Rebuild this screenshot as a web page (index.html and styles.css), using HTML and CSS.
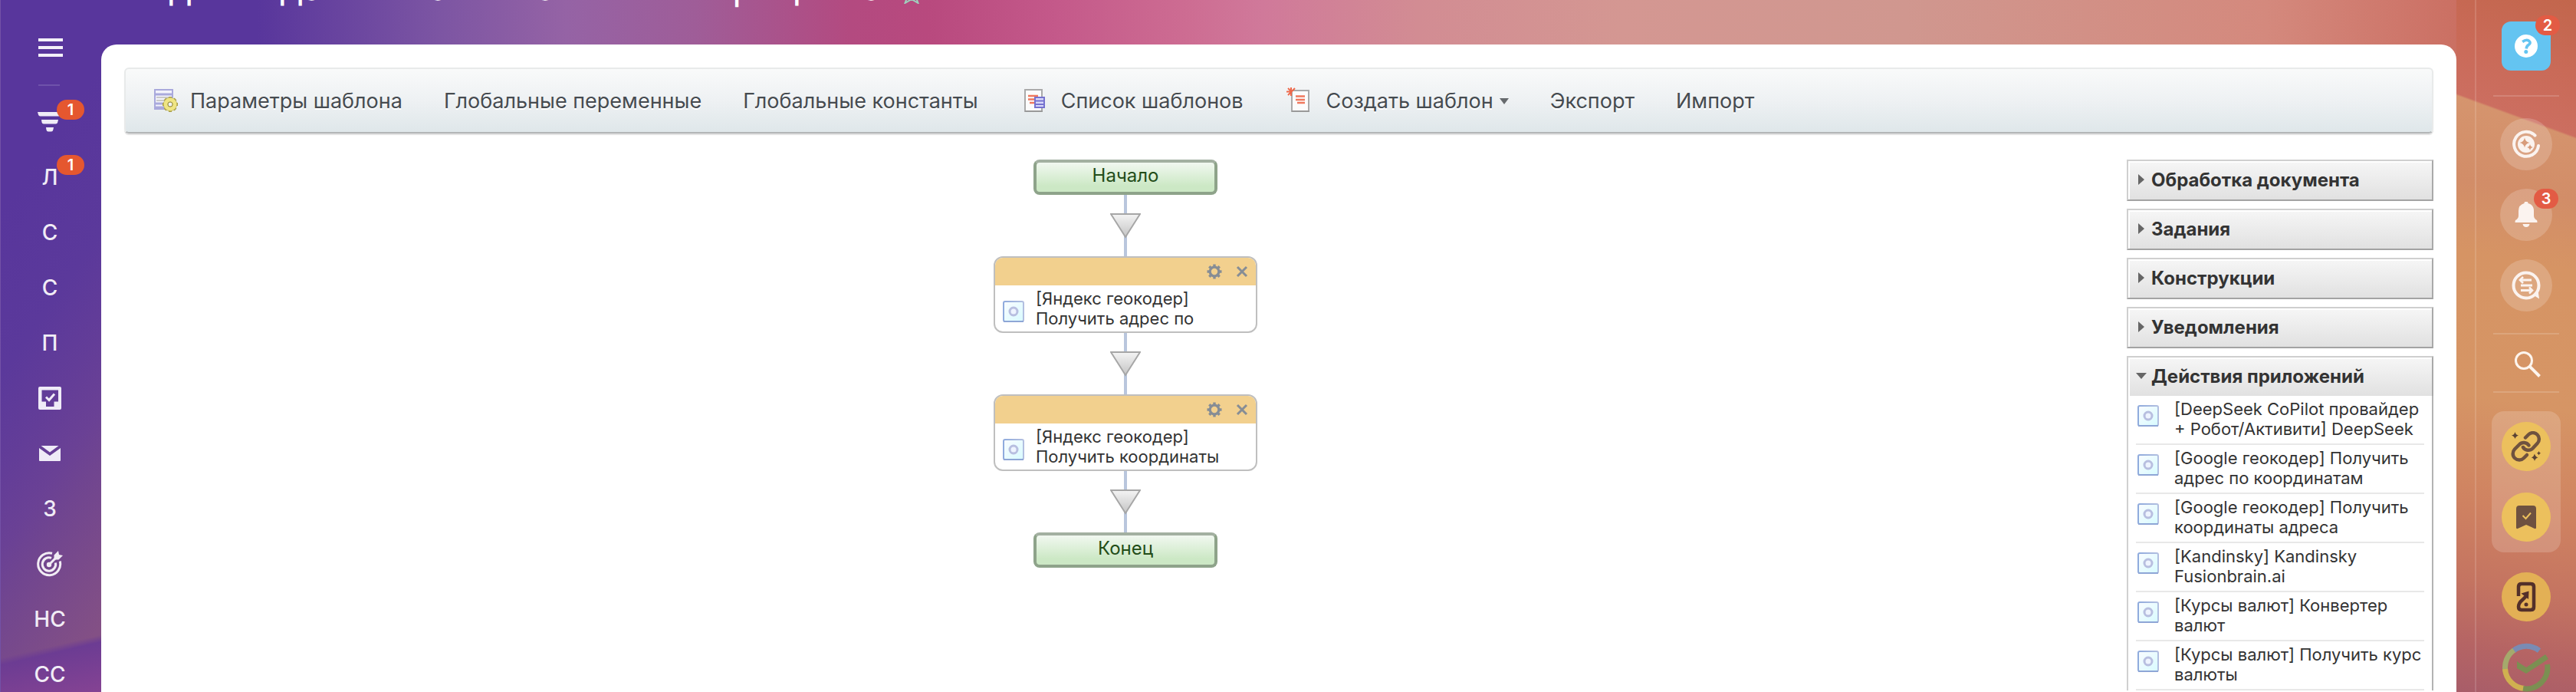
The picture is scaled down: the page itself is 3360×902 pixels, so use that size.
FILE: index.html
```
<!DOCTYPE html>
<html lang="ru">
<head>
    <meta charset="UTF-8">
    <meta name="viewport" content="width=device-width, initial-scale=1.0">
    <title>Дизайнер бизнес-процесса</title>
    <link rel="stylesheet" href="styles.css">
</head>
<body>
    <!-- общие иконки -->
    <svg class="sprite" aria-hidden="true">
        <defs>
            <linearGradient id="arrowFill" x1="0" y1="0" x2="0" y2="1">
                <stop offset="0" stop-color="#f4f4f4"/>
                <stop offset="1" stop-color="#c4c4c4"/>
            </linearGradient>
            <linearGradient id="actFill" x1="0" y1="0" x2="1" y2="1">
                <stop offset="0" stop-color="#fafcff"/>
                <stop offset="1" stop-color="#d8fbff"/>
            </linearGradient>
            <linearGradient id="actStroke" x1="0" y1="0" x2="1" y2="0">
                <stop offset="0" stop-color="#8fabdd"/>
                <stop offset="1" stop-color="#b3bfe0"/>
            </linearGradient>
            <symbol id="activity" viewBox="0 0 30 30">
                <rect x="2" y="2" width="26" height="26" rx="2" fill="url(#actFill)" stroke="url(#actStroke)" stroke-width="2"/>
                <path d="M2 28h26" stroke="#8ea6d6" stroke-width="2"/>
                <circle cx="15" cy="15" r="5" fill="#eef4ff" stroke="#b8bfe0" stroke-width="3"/>
            </symbol>
            <symbol id="arrow" viewBox="0 0 40 80">
                <path d="M20 0v80" stroke="#b9c6dd" stroke-width="4"/>
                <path d="M1 25h38L20 55z" fill="url(#arrowFill)" stroke="#a6a6a6" stroke-width="2"/>
            </symbol>
            <symbol id="gear" viewBox="0 0 20 20">
                <circle cx="10" cy="10" r="5.8" fill="none" stroke="#868d95" stroke-width="3.2"/>
                <path d="M10 .5v3M10 16.500v3M.5 10h3M16.500 10h3M3.300 3.300l2 2M14.700 14.700l2 2M3.300 16.700l2-2M14.700 5.300l2-2" stroke="#868d95" stroke-width="3.4"/>
            </symbol>
            <symbol id="close" viewBox="0 0 16 16">
                <path d="M2 2l12 12M14 2L2 14" stroke="#868d95" stroke-width="3"/>
            </symbol>
        </defs>
    </svg>

    <div class="layout">
        <nav class="left-menu">
            <button class="menu-toggle" aria-label="Меню">
                <svg width="32" height="24" viewBox="0 0 32 24"><path d="M0 2h32M0 12h32M0 22h32" stroke="#f3f0f9" stroke-width="4"/></svg>
            </button>
            <div class="menu-line"></div>
            <a class="menu-item" href="#" aria-label="CRM">
                <svg width="34" height="26" viewBox="0 0 34 26" fill="#efebf7"><path d="M1 0h31l-1 3.500q-.5 2-2.500 2H4.500q-2 0-2.500-2zM6 10h22l-.8 3.500q-.5 2-2.500 2H9q-2 0-2.500-2zM12 20h10l-.6 3q-.5 2.500-2.500 2.500h-4q-2 0-2.500-2.500z"/></svg>
                <span class="badge">1</span>
            </a>
            <a class="menu-item" href="#">Л<span class="badge">1</span></a>
            <a class="menu-item" href="#">С</a>
            <a class="menu-item" href="#">С</a>
            <a class="menu-item" href="#">П</a>
            <a class="menu-item" href="#" aria-label="Задачи">
                <svg width="30" height="30" viewBox="0 0 30 30"><path fill="#efebf7" fill-rule="evenodd" d="M2 0h26a2 2 0 0 1 2 2v26a2 2 0 0 1-2 2H2a2 2 0 0 1-2-2V2a2 2 0 0 1 2-2zM4.500 4.500v15H10V26h10.500v-6.500H26v-15z"/><path d="M10 13.500l4 4 7-8" fill="none" stroke="#efebf7" stroke-width="3"/></svg>
            </a>
            <a class="menu-item" href="#" aria-label="Почта">
                <svg width="28" height="20" viewBox="0 0 28 20" fill="#efebf7"><path d="M2.500 0h23L14 8.500z"/><path d="M0 3l14 10L28 3v16a1 1 0 0 1-1 1H1a1 1 0 0 1-1-1z"/></svg>
            </a>
            <a class="menu-item" href="#">З</a>
            <a class="menu-item" href="#" aria-label="Цели">
                <svg width="34" height="34" viewBox="0 0 34 34" fill="none" stroke="#f1ecf4"><path d="M20 3.200A14.500 14.500 0 1 0 30.200 13.500" stroke-width="3"/><path d="M19 9.300A8.700 8.700 0 1 0 24.400 15.500" stroke-width="3"/><circle cx="16" cy="18" r="3.200" fill="#f1ecf4" stroke="none"/><path d="M16 18l10-10" stroke-width="3"/><path d="M22.500 5.500L28 0l1 5 5 1-5.500 5.500h-6z" fill="#f1ecf4" stroke="none"/></svg>
            </a>
            <a class="menu-item" href="#">НС</a>
            <a class="menu-item" href="#">СС</a>
        </nav>

        <div class="center">
            <header class="page-header">
                <h1 class="page-title">Лид: Создание шаблона бизнес-процесса</h1>
                <svg class="star" width="26" height="24" viewBox="0 0 26 24"><path d="M13 1l3.500 8 8.500.5-6.500 5.500 3 8L13 18l-8.500 5 3-8L1 9.500 9.500 9z" fill="none" stroke="#9fd0bd" stroke-width="2"/></svg>
            </header>

            <main class="workarea">
                <div class="toolbar">
                    <button class="tool tool-icon">
                        <svg width="40" height="36" viewBox="0 0 40 36">
                            <rect x="8" y="3" width="23" height="25" fill="#f2f2fb" stroke="#a9a9dc" stroke-width="2"/>
                            <path d="M8 9h23M8 21h12M8 26h12" stroke="#a9a9dc" stroke-width="3"/>
                            <path d="M10 13h18M10 17h10" stroke="#c9c9c9" stroke-width="2"/>
                            <circle cx="28" cy="22" r="6" fill="none" stroke="#aaa049" stroke-width="6"/>
                            <path d="M28 12v20M18 22h20M21 15l14 14M35 15L21 29" stroke="#aaa049" stroke-width="4"/>
                            <circle cx="28" cy="22" r="6" fill="none" stroke="#efe583" stroke-width="5"/>
                            <circle cx="28" cy="22" r="3" fill="#eff2f3" stroke="#9b9147"/>
                        </svg>
                        Параметры шаблона
                    </button>
                    <button class="tool">Глобальные переменные</button>
                    <button class="tool">Глобальные константы</button>
                    <button class="tool tool-icon">
                        <svg width="40" height="36" viewBox="0 0 40 36">
                            <rect x="7" y="3" width="22" height="28" fill="#fcfcfc" stroke="#aaa" stroke-width="2"/>
                            <path d="M7 31h23" stroke="#999" stroke-width="2"/>
                            <path d="M11 11h13M11 15.500h8M13 20h6" stroke="#f0785e" stroke-width="2.500"/>
                            <rect x="20" y="13" width="12" height="13" fill="#d8d8fa" stroke="#7572cf" stroke-width="2"/>
                            <path d="M21 17.500h10M21 22h10" stroke="#7572cf" stroke-width="2"/>
                        </svg>
                        Список шаблонов
                    </button>
                    <button class="tool tool-icon">
                        <svg width="40" height="36" viewBox="0 0 40 36">
                            <rect x="9" y="4" width="22" height="27" fill="#fcfcfc" stroke="#aaa" stroke-width="2"/>
                            <path d="M9 31h23" stroke="#999" stroke-width="2"/>
                            <path d="M14 11.500h12M14 16h12M16 20h10" stroke="#f0785e" stroke-width="2.500"/>
                            <path d="M8 0v11M2 5.500h6M4 1l4 4M13 1L4 10" stroke="#ee6a4c" stroke-width="2"/>
                        </svg>
                        Создать шаблон
                        <svg width="12" height="8" viewBox="0 0 12 8"><path d="M0 0h12L6 8z" fill="#666a6d"/></svg>
                    </button>
                    <button class="tool">Экспорт</button>
                    <button class="tool">Импорт</button>
                </div>

                <div class="designer">
                    <div class="flow">
                        <div class="terminal">Начало</div>
                        <svg class="arrow"><use href="#arrow"/></svg>
                        <div class="block">
                            <div class="block-head">
                                <button class="block-btn" aria-label="Настройки"><svg width="20" height="20"><use href="#gear"/></svg></button>
                                <button class="block-btn" aria-label="Удалить"><svg width="16" height="16"><use href="#close"/></svg></button>
                            </div>
                            <div class="block-body">
                                <svg class="activity"><use href="#activity"/></svg>
                                <div class="block-text">[Яндекс геокодер]<br>Получить адрес по</div>
                            </div>
                        </div>
                        <svg class="arrow"><use href="#arrow"/></svg>
                        <div class="block">
                            <div class="block-head">
                                <button class="block-btn" aria-label="Настройки"><svg width="20" height="20"><use href="#gear"/></svg></button>
                                <button class="block-btn" aria-label="Удалить"><svg width="16" height="16"><use href="#close"/></svg></button>
                            </div>
                            <div class="block-body">
                                <svg class="activity"><use href="#activity"/></svg>
                                <div class="block-text">[Яндекс геокодер]<br>Получить координаты</div>
                            </div>
                        </div>
                        <svg class="arrow"><use href="#arrow"/></svg>
                        <div class="terminal">Конец</div>
                    </div>

                    <aside class="groups">
                        <button class="group-head">Обработка документа</button>
                        <button class="group-head">Задания</button>
                        <button class="group-head">Конструкции</button>
                        <button class="group-head">Уведомления</button>
                        <div class="group">
                            <button class="group-head open">Действия приложений</button>
                            <ul class="group-list">
                                <li><svg class="activity"><use href="#activity"/></svg><span>[DeepSeek CoPilot провайдер<br>+ Робот/Активити] DeepSeek</span></li>
                                <li><svg class="activity"><use href="#activity"/></svg><span>[Google геокодер] Получить<br>адрес по координатам</span></li>
                                <li><svg class="activity"><use href="#activity"/></svg><span>[Google геокодер] Получить<br>координаты адреса</span></li>
                                <li><svg class="activity"><use href="#activity"/></svg><span>[Kandinsky] Kandinsky<br>Fusionbrain.ai</span></li>
                                <li><svg class="activity"><use href="#activity"/></svg><span>[Курсы валют] Конвертер<br>валют</span></li>
                                <li><svg class="activity"><use href="#activity"/></svg><span>[Курсы валют] Получить курс<br>валюты</span></li>
                            </ul>
                        </div>
                    </aside>
                </div>
            </main>
        </div>

        <div class="right-bar">
            <div class="right-inner">
                <button class="help" aria-label="Помощь">
                    <svg width="30" height="30" viewBox="0 0 30 30"><circle cx="15" cy="15" r="15" fill="#fff"/><path d="M10.200 9.500Q15 5.800 18.500 8.200T18 13.600Q15.500 15 15.200 18.500" fill="none" stroke="#64c4f1" stroke-width="3.600"/><circle cx="14.800" cy="22.500" r="2.500" fill="#64c4f1"/></svg>
                    <span class="badge badge-red">2</span>
                </button>
                <div class="right-line"></div>
                <div class="round-list">
                    <button class="round" aria-label="CoPilot">
                        <svg width="38" height="38" viewBox="0 0 38 38"><path d="M30.500 7.500A16 16 0 1 0 35 21" fill="none" stroke="#fbf3ef" stroke-width="4" stroke-linecap="round"/><circle cx="19" cy="19" r="11" fill="#fbf3ef"/><path d="M17 10.500q1 5.500 6.500 6.500-5.500 1-6.500 6.500-1-5.500-6.500-6.500 5.500-1 6.500-6.500zM24 19q.7 3.300 4 4-3.300.7-4 4-.7-3.300-4-4 3.300-.7 4-4z" fill="#d89c7b"/></svg>
                    </button>
                    <button class="round" aria-label="Уведомления">
                        <svg width="30" height="34" viewBox="0 0 30 34" fill="#fbf3ef"><path d="M12.500 2a2.500 2.500 0 0 1 5 0Q25 4 25 12v6q0 4 4 6 .5 1 .5 3H.5q0-2 .5-3 4-2 4-6v-6Q5 4 12.500 2zM10.500 29h9q-.7 4-4.500 4t-4.500-4z"/></svg>
                        <span class="badge badge-red">3</span>
                    </button>
                    <button class="round" aria-label="Чат">
                        <svg width="38" height="38" viewBox="0 0 38 38" fill="none" stroke="#fbf3ef"><circle cx="19" cy="19" r="16.500" stroke-width="4"/><path d="M29 32l7 4.500-1.500-11z" fill="#fbf3ef" stroke="none"/><path d="M12 12h14M12 19h15M12 25.500h14" stroke-width="2.800"/><path d="M15 8l-4 4 4 4M23 21.500l4 4-4 4" stroke-width="2.600"/></svg>
                    </button>
                </div>
                <div class="right-line"></div>
                <button class="search" aria-label="Поиск">
                    <svg width="34" height="34" viewBox="0 0 34 34" fill="none" stroke="#fdf5ee"><circle cx="12" cy="12" r="10.500" stroke-width="3"/><path d="M19.500 19.500l13 13" stroke-width="4"/></svg>
                </button>
                <div class="right-line"></div>
                <div class="chat-group">
                    <button class="chat" aria-label="Ссылки">
                        <svg width="40" height="40" viewBox="0 0 40 40" fill="none" stroke="#6f523f"><g stroke-width="4.500" stroke-linecap="round"><path d="M19 8.500l4-4a8 8 0 0 1 11.500 11.500l-6 6.500a8 8 0 0 1-12.500-1.500"/><path d="M21 31l-4 4A8 8 0 0 1 5 23.500l6-6a8 8 0 0 1 12.500 1"/></g><path d="M5.500 1q1 4 4.500 4.500-3.500 1-4.500 4.500-1-3.500-4.500-4.500Q4.500 5 5.500 1zM31 29.500q1 4 4.500 5-3.500.5-4.500 4.500-1-4-4.500-4.500 3.500-1 4.500-5zM36.500 26q.6 2 2.500 2.800-2 .6-2.500 2.500-.6-2-2.500-2.500 2-.8 2.500-2.800z" fill="#5b4234" stroke="none"/></svg>
                    </button>
                    <button class="chat" aria-label="Закладки">
                        <svg width="28" height="32" viewBox="0 0 28 32"><path d="M5 1h18q4 0 4 4v25q0 1.500-2 1l-11-5-11 5q-2 .5-2-1V5q0-4 4-4z" fill="#6e5140"/><path d="M9.500 14l4 4 6.500-7.500" fill="none" stroke="#ecc05d" stroke-width="2"/></svg>
                    </button>
                </div>
                <button class="chat chat-dark" aria-label="Приложение">
                    <svg width="26" height="40" viewBox="0 0 26 40"><path d="M3 19V7q0-4 4-4h12q4 0 4 4v26q0 4-4 4H7q-4 0-4-4 0-5 5-9l6-6" fill="none" stroke="#53302a" stroke-width="4.500"/><path d="M6.500 15.500l10-3-.5 10.500z" fill="#53302a"/><circle cx="13" cy="30" r="2.500" fill="#53302a"/></svg>
                </button>
                <button class="chat-check" aria-label="Готово">
                    <svg width="64" height="64" viewBox="0 0 64 64" fill="none" stroke-width="7"><path d="M49 10A27.500 27.500 0 0 0 15 10.500" stroke="#7a8bb3"/><path d="M16 9.500A27.500 27.500 0 0 0 5 37" stroke="#a5a96c"/><path d="M4.500 34A27.500 27.500 0 0 0 30 59.500" stroke="#d0b050"/><path d="M28 59.500A27.500 27.500 0 0 0 59.500 28" stroke="#7b8f52"/><path d="M20 24v9l12 7 29-19-4-6-25 17z" fill="#7b8f52" stroke="none"/></svg>
                </button>
            </div>
        </div>
    </div>
</body>
</html>
```

FILE: styles.css
```
* {
    box-sizing: border-box;
}
body {
    margin: 0;
    font-family: Inter, "Liberation Sans", sans-serif;
    color: #333;
    background: linear-gradient(90deg, #58369c 10%, #7c55a3 17%, #9563a5 22%, #9f5d98 27%, #b34a80 33%, #b8497e 36%, #c4598a 41%, #cd6c92 46%, #d0799a 49%, #d28c93 55%, #d49792 63%, #d0978f 74%, #d4897d 88%, #cd7468 94%, #c96e60 96%);
}
button {
    padding: 0;
    border: none;
    background: none;
    font: inherit;
    color: inherit;
    cursor: pointer;
}
svg {
    display: block;
    flex: none;
}
.sprite {
    position: absolute;
    width: 0;
    height: 0;
}
.layout {
    display: flex;
    height: 100vh;
    overflow: hidden;
}

/* левое меню */
.left-menu {
    flex: none;
    width: 132px;
    padding-top: 50px;
    border-left: 1px solid #7351a6;
    background:
        linear-gradient(167deg, transparent 92%, #6c3c93 93%, #854393 100%),
        linear-gradient(125deg, #58369c 25%, #5b399b 45%, #633d98 57%, #6a4195 66%, #704590 72%, #835085 92%);
}
.menu-toggle {
    display: block;
    margin-left: 49px;
}
.menu-line {
    width: 28px;
    height: 2px;
    margin: 36px 0 11px 49px;
    background: rgba(255, 255, 255, .14);
}
.menu-item {
    position: relative;
    display: flex;
    align-items: center;
    justify-content: center;
    width: 128px;
    height: 72px;
    font-size: 28px;
    font-weight: 500;
    color: #f1ecf6;
    text-decoration: none;
}
.badge {
    position: absolute;
    top: 7px;
    left: 73px;
    width: 36px;
    height: 26px;
    border-radius: 13px;
    background: #e5572f;
    color: #fff;
    font-size: 20px;
    font-weight: 600;
    line-height: 26px;
    text-align: center;
}
.badge-red {
    top: -8px;
    left: 44px;
    width: 32px;
    background: #e35b44;
}

/* центральная часть */
.center {
    flex: 1;
    min-width: 0;
    display: flex;
    flex-direction: column;
}
.page-header {
    display: flex;
    gap: 24px;
    height: 58px;
    overflow: hidden;
    padding-left: 24px;
}
.page-title {
    margin: -49px 0 0;
    font-size: 48px;
    font-weight: 400;
    line-height: 64px;
    color: #fff;
}
.star {
    margin-top: -19px;
}
.workarea {
    flex: 1;
    min-height: 0;
    padding: 30px 30px 0;
    border-radius: 20px 20px 0 0;
    background: #fff;
}
.toolbar {
    display: flex;
    align-items: center;
    gap: 54px;
    height: 86px;
    padding-left: 30px;
    border: 2px solid #e8eaea;
    border-bottom-color: #b3b6b7;
    border-radius: 6px;
    background: linear-gradient(#f9fafa, #eef1f3 50%, #dfe7ea);
    box-shadow: 0 2px 1px rgba(0, 0, 0, .12);
}
.tool {
    padding-top: 2px;
    font-size: 27px;
    line-height: 36px;
    color: #464b50;
    text-shadow: 0 2px 0 #fff;
    white-space: nowrap;
}
.tool-icon {
    display: flex;
    align-items: center;
    gap: 14px;
}
.tool-icon svg + svg {
    margin-left: -6px;
}
.designer {
    display: flex;
    margin-top: 34px;
}
.flow {
    flex: 1;
    display: flex;
    flex-direction: column;
    align-items: center;
}
.terminal {
    width: 240px;
    height: 46px;
    border: 4px solid #8ea38a;
    border-top-color: #a3b0a1;
    border-radius: 8px;
    background: linear-gradient(#f1f8f0, #cce8c5 80%);
    color: #234d18;
    font-size: 24px;
    line-height: 34px;
    text-align: center;
}
.arrow {
    width: 40px;
    height: 80px;
}
.block {
    width: 344px;
    height: 100px;
    border: 2px solid #bfbfbf;
    border-radius: 12px;
    background: #fff;
    overflow: hidden;
}
.block-head {
    display: flex;
    align-items: center;
    justify-content: flex-end;
    gap: 18px;
    height: 36px;
    padding-right: 10px;
    background: #f2d08e;
}
.block-body {
    display: flex;
    padding: 4px 9px;
}
.activity {
    width: 30px;
    height: 30px;
    margin-top: 15px;
}
.block-text {
    margin-left: 14px;
    font-size: 22px;
    line-height: 26px;
    white-space: nowrap;
}

/* список действий */
.groups {
    flex: none;
    display: flex;
    flex-direction: column;
    gap: 10px;
    width: 400px;
}
.group-head {
    display: flex;
    align-items: center;
    gap: 9px;
    width: 100%;
    height: 54px;
    padding: 0 0 2px 13px;
    border: 2px solid #cfcfcf;
    border-right-color: #a9a9a9;
    border-bottom-color: #a3a3a3;
    background: linear-gradient(#f6f6f6, #e1e1e1);
    box-shadow: inset 2px 2px 0 #fff;
    font-size: 24px;
    font-weight: 700;
}
.group-head::before {
    content: "";
    border: 7px solid transparent;
    border-left: 8px solid #666;
    border-right: none;
}
.group-head.open {
    height: 52px;
    padding-left: 10px;
    gap: 6px;
    border-bottom: none;
}
.group-head.open::before {
    border: 7px solid transparent;
    border-top: 8px solid #666;
    border-bottom: none;
}
.group-list {
    margin: 0;
    padding: 0 10px;
    border-left: 2px solid #d0d0d0;
    border-right: 2px solid #b3b3b3;
    list-style: none;
}
.group-list li {
    display: flex;
    height: 64px;
    padding: 4px 0 0 1px;
    border-bottom: 2px solid #e8e8e8;
    font-size: 22px;
    line-height: 26px;
    white-space: nowrap;
}
.group-list .activity {
    margin-top: 7px;
    margin-right: 19px;
}

/* правая панель */
.right-bar {
    flex: none;
    width: 156px;
    padding-left: 24px;
    background:
        linear-gradient(200deg, #c2664c, #c96a57 10%, #cc6e60 18.600%, transparent 18.900%),
        linear-gradient(190deg, #d6966f 14%, #d28d68 28%, #d69464 38%, #d69565 58%, #cf8261 73%, #c47461 84%, #b56464 93%, #a85d69);
}
.right-inner {
    display: flex;
    flex-direction: column;
    align-items: center;
    height: 100%;
    padding-top: 28px;
    border-left: 2px solid rgba(255, 255, 255, .14);
}
.help {
    position: relative;
    display: grid;
    place-items: center;
    width: 64px;
    height: 64px;
    border-radius: 12px;
    background: #64c4f1;
}
.right-line {
    flex: none;
    width: 86px;
    height: 2px;
    background: rgba(255, 255, 255, .16);
}
.help + .right-line {
    margin-top: 32px;
}
.round-list {
    display: flex;
    flex-direction: column;
    gap: 24px;
    padding: 28px 0;
}
.round {
    position: relative;
    display: grid;
    place-items: center;
    width: 68px;
    height: 68px;
    border-radius: 50%;
    background: rgba(255, 255, 255, .18);
}
.round .badge-red {
    top: 0;
}
.search {
    padding: 22px 0 18px 4px;
}
.chat-group {
    display: flex;
    flex-direction: column;
    gap: 28px;
    margin: 24px 0 26px;
    padding: 14px 13px;
    border-radius: 16px;
    background: rgba(255, 255, 255, .17);
}
.chat {
    flex: none;
    display: grid;
    place-items: center;
    width: 64px;
    height: 64px;
    border-radius: 50%;
    background: #ecc05d;
}
.chat-dark {
    background: #e3b055;
}
.chat-check {
    margin-top: 28px;
}
```
